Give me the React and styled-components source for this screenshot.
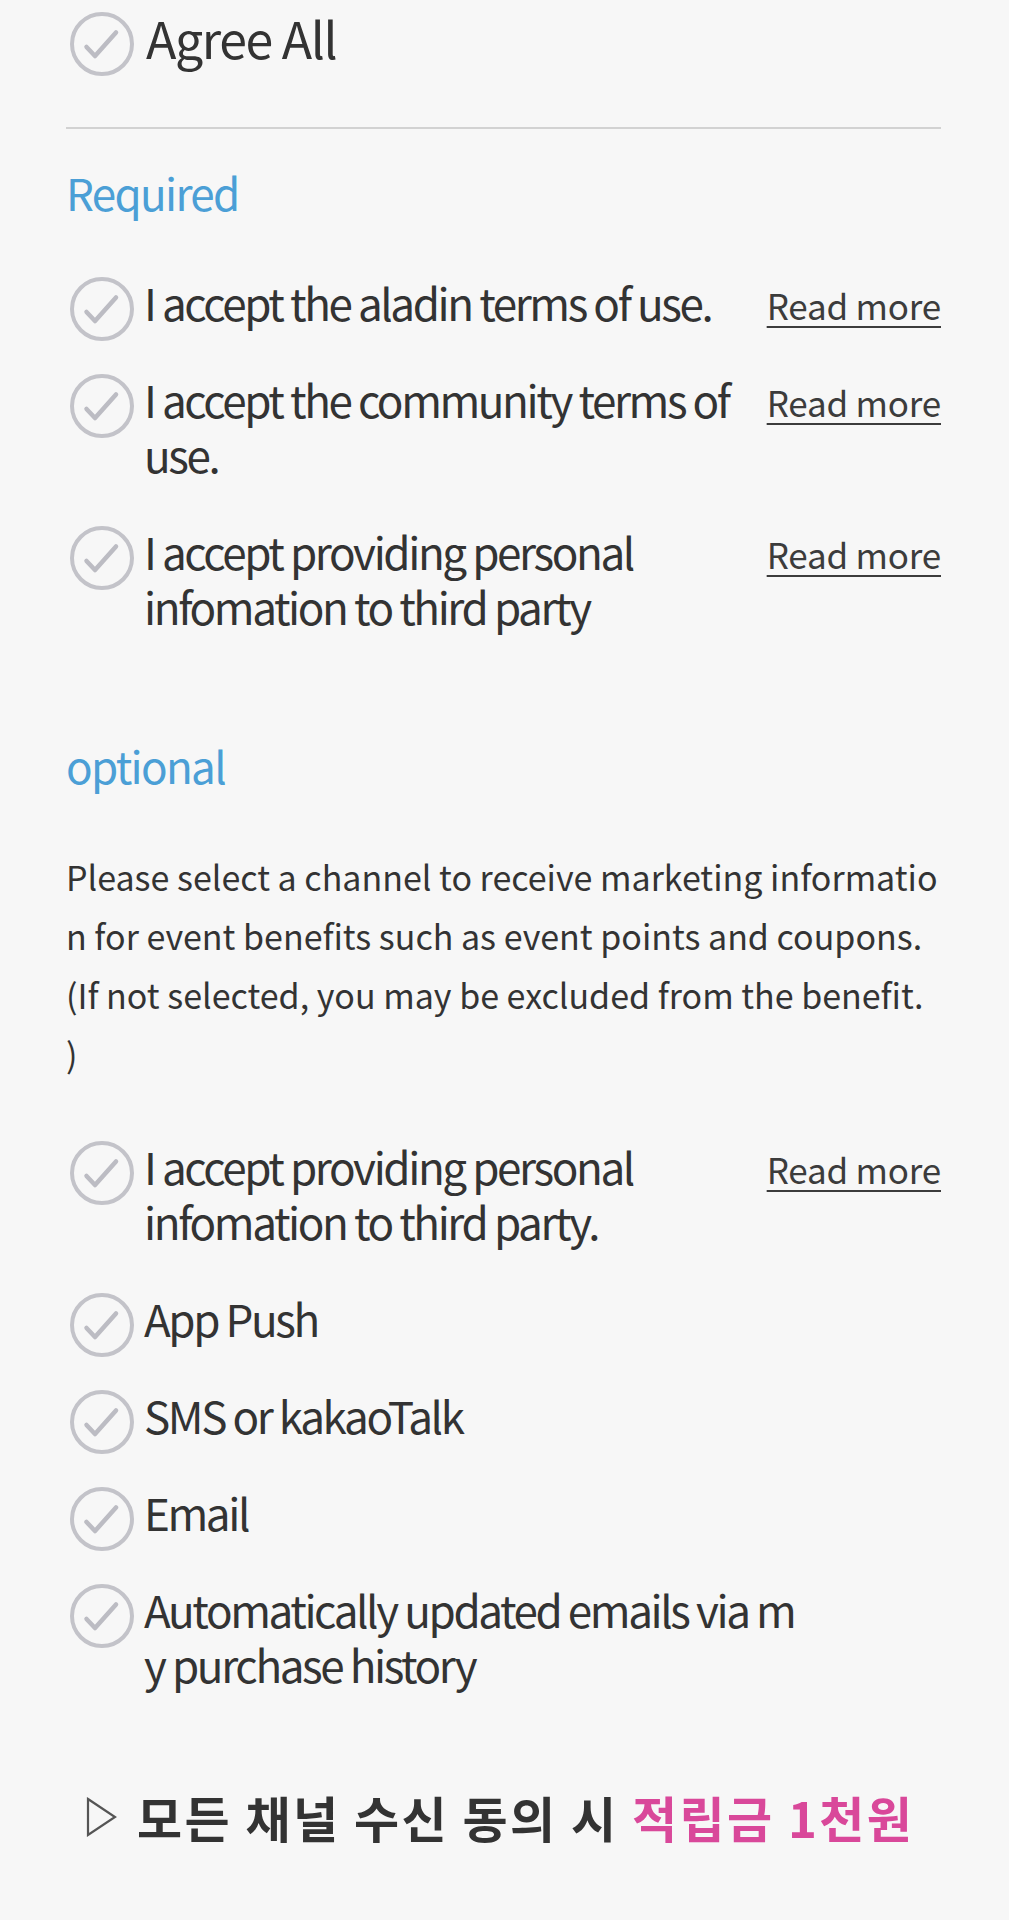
import React from 'react';
import styled, { createGlobalStyle } from 'styled-components';

const GlobalStyle = createGlobalStyle`
  html, body {
    margin: 0;
    padding: 0;
    background: #f7f7f7;
  }
  body {
    font-family: "Noto Sans CJK KR", "Noto Sans", sans-serif;
    color: #333;
  }
`;

const Page = styled.div`
  background: #f7f7f7;
  min-height: 1920px;
  padding: 12px 68px 0 66px;
  box-sizing: border-box;
`;

const Row = styled.div`
  display: flex;
  align-items: flex-start;
  margin-top: ${p => p.$top || 0}px;
`;

const Box = styled.svg`
  flex-shrink: 0;
  width: 64px;
  height: 64px;
  margin-left: 4px;
  margin-right: ${p => (p.$big ? 12 : 10)}px;
`;

const AgreeText = styled.div`
  font-size: 50px;
  line-height: 64px;
  letter-spacing: -1.4px;
  margin-top: -7px;
  color: #333;
`;

const Label = styled.div`
  flex: 1;
  max-width: 652px;
  font-size: 44px;
  line-height: 55px;
  letter-spacing: -2.4px;
  margin-top: -2px;
  padding-bottom: 11px;
  color: #333;
  word-break: ${p => (p.$breakAll ? 'break-all' : 'normal')};
`;

const ReadMore = styled.a`
  margin-left: auto;
  flex-shrink: 0;
  font-size: 35px;
  line-height: 55px;
  letter-spacing: -0.2px;
  color: #3c3c3c;
  text-decoration: underline;
  text-decoration-thickness: 2px;
  text-underline-offset: 6px;
  cursor: pointer;
`;

const Divider = styled.hr`
  border: 0;
  height: 2px;
  background: #d2d2d2;
  margin: 51px 0 0;
`;

const Title = styled.div`
  font-size: 44px;
  line-height: 56px;
  letter-spacing: -1.7px;
  color: #4b9fd6;
  margin-top: ${p => p.$top}px;
`;

const Notice = styled.p`
  margin: 54px 0 0;
  font-size: 34px;
  line-height: 59px;
  color: #333;
  word-break: break-all;
`;

const Benefit = styled.div`
  display: flex;
  align-items: center;
  margin-top: 84px;
  padding-left: 20px;
  font-size: 49px;
  line-height: 60px;
  letter-spacing: 2.4px;
  font-weight: 700;
  color: #333;
`;

const Arrow = styled.svg`
  width: 32px;
  height: 40px;
  margin-right: 19px;
  flex-shrink: 0;
`;

const Pink = styled.span`
  color: #d9489a;
`;

function Check({ big }) {
  return (
    <Box viewBox="0 0 64 64" $big={big}>
      <circle cx="32" cy="32" r="30" fill="none" stroke="#c3c3c9" strokeWidth="4" />
      <polyline
        points="16.5,35 25,44 46,20.5"
        fill="none"
        stroke="#bcbcc3"
        strokeWidth="4.5"
        strokeLinecap="round"
        strokeLinejoin="round"
      />
    </Box>
  );
}

function Item({ text, more, top, breakAll }) {
  return (
    <Row $top={top}>
      <Check />
      <Label $breakAll={breakAll}>{text}</Label>
      {more && <ReadMore>Read more</ReadMore>}
    </Row>
  );
}

export default function App() {
  return (
    <>
      <GlobalStyle />
      <Page>
        <Row>
          <Check big />
          <AgreeText>Agree All</AgreeText>
        </Row>
        <Divider />

        <Title $top={35}>Required</Title>
        <Item top={57} more text="I accept the aladin terms of use." />
        <Item top={33} more text="I accept the community terms of use." />
        <Item top={33} more text="I accept providing personal infomation to third party" />

        <Title $top={92}>optional</Title>
        <Notice>
          Please select a channel to receive marketing information for event benefits such as event points and coupons.(If not selected, you may be excluded from the benefit.<br />)
        </Notice>
        <Item top={58} more text="I accept providing personal infomation to third party." />
        <Item top={33} text="App Push" />
        <Item top={33} text="SMS or kakaoTalk" />
        <Item top={33} text="Email" />
        <Item top={33} breakAll text="Automatically updated emails via my purchase history" />

        <Benefit>
          <Arrow viewBox="0 0 32 40">
            <polygon points="2,2 29,20 2,38" fill="none" stroke="#555" strokeWidth="2.2" strokeLinejoin="miter" />
          </Arrow>
          <span>
            모든 채널 수신 동의 시 <Pink>적립금 1천원</Pink>
          </span>
        </Benefit>
      </Page>
    </>
  );
}
